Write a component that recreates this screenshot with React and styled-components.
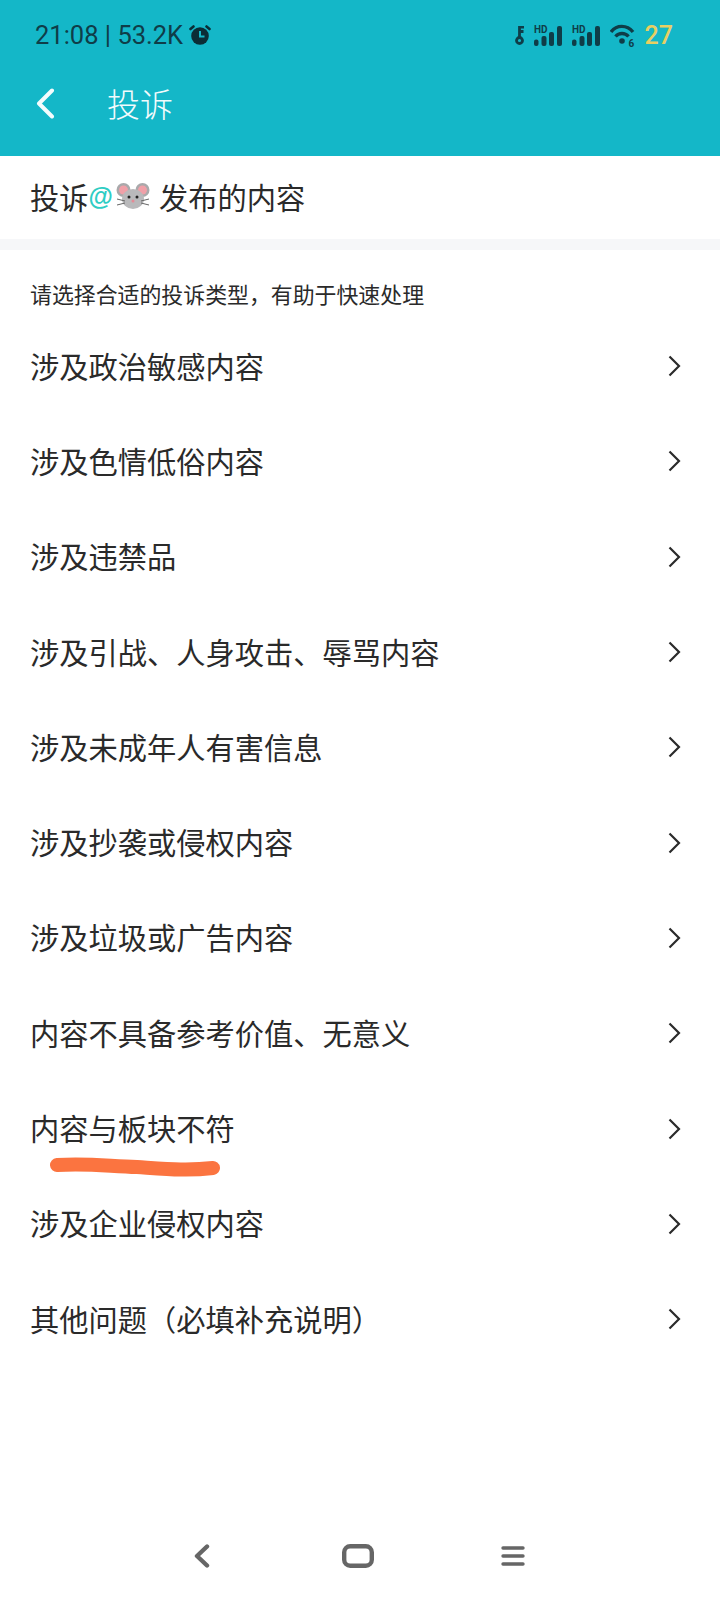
import React from 'react';
import styled, { createGlobalStyle } from 'styled-components';

const GlobalStyle = createGlobalStyle`
  html, body {
    margin: 0;
    padding: 0;
    background: #fff;
  }
  body {
    font-family: "Noto Sans CJK SC", "Noto Sans", sans-serif;
  }
`;

const Page = styled.div`
  width: 720px;
  height: 1600px;
  display: flex;
  flex-direction: column;
  background: #fff;
  overflow: hidden;
`;

const Header = styled.header`
  height: 156px;
  background: #14b7c8;
  display: flex;
  flex-direction: column;
`;

const StatusBar = styled.div`
  height: 70px;
  padding: 0 47px 0 35px;
  display: flex;
  align-items: center;
  justify-content: space-between;
  color: #0f3d48;
`;

const StatusLeft = styled.div`
  display: flex;
  align-items: center;
  gap: 6px;
  font-family: Roboto, "Liberation Sans", sans-serif;
  font-size: 25.5px;
`;

const StatusRight = styled.div`
  display: flex;
  align-items: center;
  gap: 10px;
`;

const Battery = styled.span`
  font-family: Roboto, "Liberation Sans", sans-serif;
  font-size: 25px;
  font-weight: 500;
  color: #e8cf62;
`;

const NavBar = styled.div`
  height: 66px;
  padding: 0 0 2px 36px;
  display: flex;
  align-items: center;
  gap: 52px;
`;

const NavTitle = styled.h1`
  margin: 0;
  font-size: 33px;
  font-weight: 300;
  color: #f2fbfc;
`;

const Subject = styled.div`
  height: 80px;
  padding: 0 30px 3px;
  display: flex;
  align-items: center;
  font-size: 29.25px;
  color: #2a2a2a;
  border-bottom: 11px solid #f6f7f9;
`;

const At = styled.span`
  color: #2fcdc4;
  font-family: "Liberation Sans", sans-serif;
  font-size: 25px;
  font-weight: 700;
`;

const MouseIcon = styled.svg`
  width: 34px;
  height: 30px;
  margin: 0 9px 0 3px;
`;

const Hint = styled.p`
  margin: 28px 0 0;
  padding: 0 30px;
  height: 31px;
  line-height: 31px;
  font-size: 21.9px;
  color: #2a2a2a;
`;

const List = styled.ul`
  margin: 0;
  padding: 8px 0 0;
  list-style: none;
`;

const Row = styled.li`
  position: relative;
  height: 95.3px;
  padding: 0 39px 0 30px;
  display: flex;
  align-items: center;
  justify-content: space-between;
  font-size: 29.25px;
  color: #2a2a2a;
`;

const Scribble = styled.svg`
  position: absolute;
  left: 47px;
  top: 78px;
  width: 176px;
  height: 24px;
`;

const Arrow = styled.svg`
  width: 13px;
  height: 22px;
  margin-top: 3px;
`;

const BottomNav = styled.nav`
  margin-top: auto;
  height: 70px;
  padding: 0 195px 9px 194px;
  display: flex;
  align-items: center;
  justify-content: space-between;
`;

const Chevron = () => (
  <Arrow viewBox="0 0 13 22" fill="none" stroke="#2b2b2b" strokeWidth="2.2">
    <path d="M1.5 1.5 11 11 1.5 20.5" />
  </Arrow>
);

const SignalIcon = () => (
  <svg width="28" height="21" viewBox="0 0 28 21" fill="currentColor">
    <text x="0" y="8" fontSize="10" fontWeight="700" fontFamily="Roboto, sans-serif">HD</text>
    <rect x="0" y="14.5" width="4.5" height="6.5" rx="2" />
    <rect x="7.5" y="11" width="5" height="10" rx="2" />
    <rect x="15" y="7" width="5" height="14" rx="2" />
    <rect x="23" y="1" width="5" height="20" rx="2" />
  </svg>
);

const items = [
  '涉及政治敏感内容',
  '涉及色情低俗内容',
  '涉及违禁品',
  '涉及引战、人身攻击、辱骂内容',
  '涉及未成年人有害信息',
  '涉及抄袭或侵权内容',
  '涉及垃圾或广告内容',
  '内容不具备参考价值、无意义',
  '内容与板块不符',
  '涉及企业侵权内容',
  '其他问题（必填补充说明）',
];

export default function App() {
  return (
    <Page>
      <GlobalStyle />
      <Header>
        <StatusBar>
          <StatusLeft>
            <span>21:08 | 53.2K</span>
            <svg width="22" height="20" viewBox="0 0 22 20">
              <circle cx="11" cy="11" r="8.8" fill="#0b2d36" />
              <path d="M11 6V11.5H15.5" fill="none" stroke="#14b7c8" strokeWidth="2" />
              <path d="M1.5 4 4.5 1.5M20.5 4 17.5 1.5" stroke="#0b2d36" strokeWidth="2.6" strokeLinecap="round" />
            </svg>
          </StatusLeft>
          <StatusRight>
            <svg width="9" height="19" viewBox="0 0 9 19" fill="none" stroke="currentColor" strokeWidth="2.8">
              <circle cx="4.5" cy="14.5" r="3" />
              <path d="M4.5 11V1H9M4.5 5.5H8.5" />
            </svg>
            <SignalIcon />
            <SignalIcon />
            <svg width="25" height="23" viewBox="0 0 25 23" fill="none" stroke="currentColor" strokeWidth="3.4">
              <path d="M1 8C6.5 .5 17 .5 23 8M5.5 12.5C9 8.5 15 8.5 18.5 12.5" />
              <circle cx="12" cy="17" r="2.8" fill="currentColor" stroke="none" />
              <text x="18.5" y="22.5" fontSize="10" fontWeight="700" fontFamily="Roboto, sans-serif" fill="currentColor" stroke="none">6</text>
            </svg>
            <Battery>27</Battery>
          </StatusRight>
        </StatusBar>
        <NavBar>
          <svg width="19" height="31" viewBox="0 0 19 31" fill="none" stroke="#f4fcfd" strokeWidth="4" strokeLinecap="round" strokeLinejoin="round">
            <path d="M16 2.5 3 15.5 16 28.5" />
          </svg>
          <NavTitle>投诉</NavTitle>
        </NavBar>
      </Header>
      <Subject>
        投诉<At>@</At>
        <MouseIcon viewBox="0 0 34 30">
          <circle cx="7.5" cy="9" r="7" fill="#a9a9ab" />
          <circle cx="26.5" cy="9" r="7" fill="#a9a9ab" />
          <circle cx="7.5" cy="9" r="4.5" fill="#f0a0a8" />
          <circle cx="26.5" cy="9" r="4.5" fill="#f0a0a8" />
          <ellipse cx="17" cy="18" rx="11" ry="10" fill="#b9b9bb" />
          <circle cx="13" cy="16" r="1.5" fill="#222" />
          <circle cx="21" cy="16" r="1.5" fill="#222" />
          <circle cx="17" cy="20" r="1.5" fill="#e58a96" />
          <path d="M1 18 9 20M1 24 9 22M33 18 25 20M33 24 25 22" stroke="#666" strokeWidth="1" />
        </MouseIcon>
        发布的内容
      </Subject>
      <Hint>请选择合适的投诉类型，有助于快速处理</Hint>
      <List>
        {items.map(item => (
          <Row key={item}>
            {item}
            {item === '内容与板块不符' && (
              <Scribble viewBox="0 0 176 24" fill="none" stroke="#fb7440" strokeWidth="14" strokeLinecap="round">
                <path d="M10 8C40 6 60 9 90 10 120 12 140 14 166 11" />
              </Scribble>
            )}
            <Chevron />
          </Row>
        ))}
      </List>
      <BottomNav>
        <svg width="20" height="24" viewBox="0 0 20 24" fill="none" stroke="#666" strokeWidth="4.4" strokeLinecap="round" strokeLinejoin="round">
          <path d="M13 2.5 3 12 13 21.5" />
        </svg>
        <svg width="32" height="24" viewBox="0 0 32 24" fill="none" stroke="#666" strokeWidth="4.4">
          <rect x="2.2" y="2.2" width="27.6" height="19.6" rx="6" />
        </svg>
        <svg width="24" height="20" viewBox="0 0 24 20" fill="none" stroke="#666" strokeWidth="3.4" strokeLinecap="round">
          <path d="M2 2H22M2 10H22M2 18H22" />
        </svg>
      </BottomNav>
    </Page>
  );
}
